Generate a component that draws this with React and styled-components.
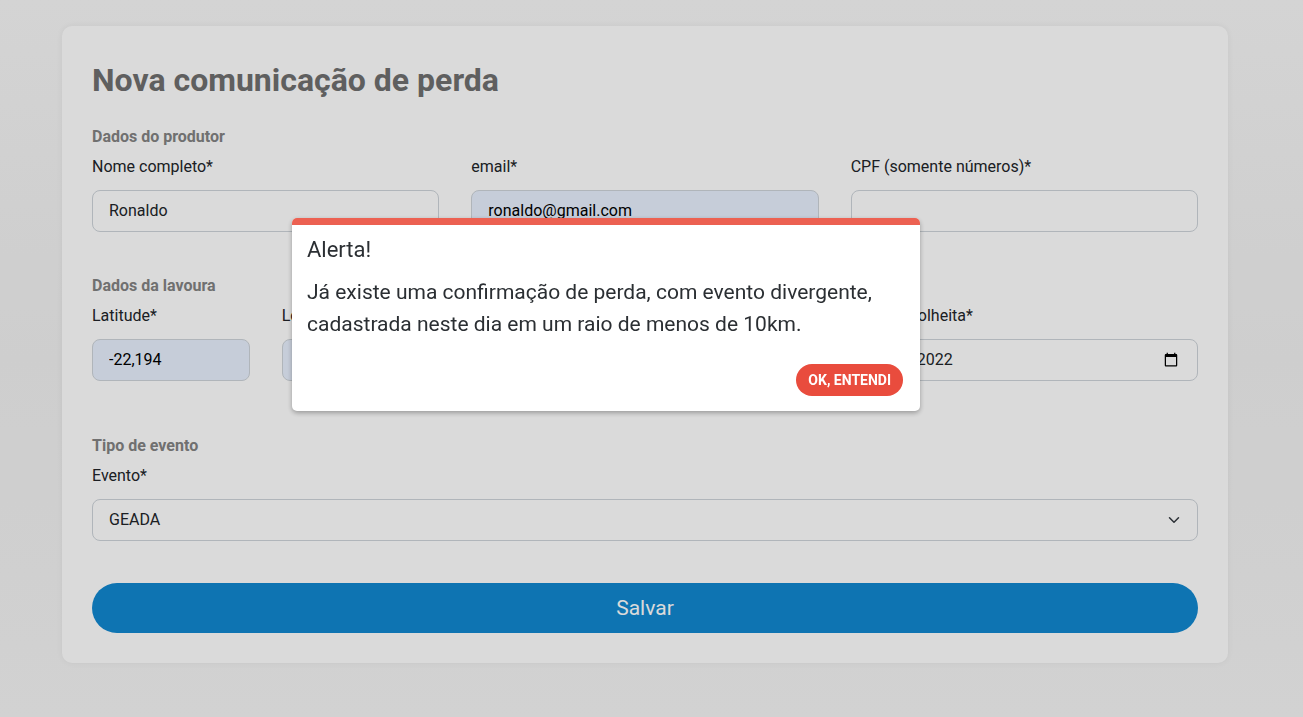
import React from "react";
import styled, { createGlobalStyle } from "styled-components";

const GlobalStyle = createGlobalStyle`
  *, *::before, *::after { box-sizing: border-box; }
  body {
    margin: 0;
    background: #f6f6f6;
    color: #212529;
    font: 400 16px/24px Roboto, "Liberation Sans", sans-serif;
  }
`;

const Page = styled.main`
  min-height: 100vh;
  padding: 26px 75px 54px 62px;
  background: linear-gradient(180deg, #f8f8f8 0%, #f1f1f1 50%, #f6f6f6 100%);
`;

const Card = styled.form`
  padding: 30px;
  border-radius: 10px;
  background: #fff;
  box-shadow: 0 0 6px rgba(0, 0, 0, 0.06);
`;

const Title = styled.h1`
  margin: 0 0 21px;
  color: #707070;
  font-size: 32px;
  line-height: 48px;
  font-weight: 700;
`;

const Section = styled.section`
  margin-bottom: ${({ $gap }) => $gap}px;
`;

const SectionTitle = styled.h2`
  margin: 0 0 6px;
  color: #838383;
  font-size: 16px;
  line-height: 24px;
  font-weight: 700;
`;

const Fields = styled.div`
  display: grid;
  grid-template-columns: repeat(12, minmax(0, 1fr));
  column-gap: 32px;
`;

const Field = styled.div`
  grid-column: span ${({ $span }) => $span};
  display: flex;
  flex-direction: column;
  gap: 11px;
`;

const Label = styled.label`
  line-height: 24px;
  white-space: nowrap;
`;

const Input = styled.input`
  width: 100%;
  height: 42px;
  padding: 7px 16px 9px;
  border: 1px solid #ced4da;
  border-radius: 8px;
  background: ${({ $filled }) => ($filled ? "#e8f0fe" : "#fff")};
  color: ${({ $filled }) => ($filled ? "#000" : "#212529")};
  font: inherit;

  &[type="date"] {
    padding: 8px 16px;
  }

  &::-webkit-datetime-edit-day-field,
  &::-webkit-datetime-edit-month-field,
  &::-webkit-datetime-edit-year-field {
    padding: 0;
  }
`;

const SelectBox = styled.div`
  display: grid;
  align-items: center;

  > * { grid-area: 1 / 1; }
  > svg { justify-self: end; margin-right: 18px; pointer-events: none; }
`;

const Select = styled.select`
  width: 100%;
  height: 42px;
  padding: 8px 16px;
  border: 1px solid #ced4da;
  border-radius: 8px;
  appearance: none;
  background: #fff;
  color: #212529;
  font: inherit;
`;

const SaveButton = styled.button`
  display: block;
  width: 100%;
  height: 50px;
  border: 0;
  border-radius: 25px;
  background: #1188d1;
  color: #fff;
  font: 400 21px/32px Roboto, sans-serif;
`;

const Overlay = styled.div`
  position: fixed;
  inset: 0;
  display: flex;
  align-items: center;
  justify-content: center;
  padding: 0 91px 88px 0;
  background: rgba(0, 0, 0, 0.145);
`;

const Dialog = styled.div`
  width: 628px;
  max-width: 100%;
  overflow: hidden;
  border-radius: 5px;
  background: #fff;
  box-shadow: 0 2px 5px rgba(0, 0, 0, 0.3);

  &::before {
    content: "";
    display: block;
    height: 7px;
    background: #ec6152;
  }
`;

const DialogBody = styled.div`
  padding: 9px 15px 24px;
  color: #2b2f33;
  font-size: 21px;
  line-height: 32px;
`;

const DialogTitle = styled.h2`
  margin: 0 0 10px;
  font-size: 22px;
  line-height: 32px;
  font-weight: 400;
`;

const DialogText = styled.p`
  margin: 0;
`;

const DialogActions = styled.div`
  display: flex;
  justify-content: flex-end;
  padding: 0 17px 15px;
`;

const ConfirmButton = styled.button`
  height: 32px;
  padding: 0 12px;
  border: 0;
  border-radius: 16px;
  background: #e94c3d;
  color: #fff;
  font: 700 14px/20px Roboto, sans-serif;
  text-transform: uppercase;
`;

function TextField({ id, label, span, ...rest }) {
  return (
    <Field $span={span}>
      <Label htmlFor={id}>{label}</Label>
      <Input id={id} {...rest} />
    </Field>
  );
}

export default function App() {
  return (
    <>
      <GlobalStyle />
      <Page>
        <Card onSubmit={(e) => e.preventDefault()}>
          <Title>Nova comunicação de perda</Title>
          <Section $gap={42}>
            <SectionTitle>Dados do produtor</SectionTitle>
            <Fields>
              <TextField id="nome" label="Nome completo*" span={4} defaultValue="Ronaldo" />
              <TextField id="email" label="email*" span={4} type="email" defaultValue="ronaldo@gmail.com" $filled />
              <TextField id="cpf" label="CPF (somente números)*" span={4} />
            </Fields>
          </Section>
          <Section $gap={53}>
            <SectionTitle>Dados da lavoura</SectionTitle>
            <Fields>
              <TextField id="latitude" label="Latitude*" span={2} defaultValue="-22,194" $filled />
              <TextField id="longitude" label="Longitude*" span={2} $filled />
              <TextField id="lavoura" label="Tipo da lavoura*" span={4} />
              <TextField id="colheita" label="Data da colheita*" span={4} type="date" defaultValue="2022-10-10" />
            </Fields>
          </Section>
          <Section $gap={42}>
            <SectionTitle>Tipo de evento</SectionTitle>
            <Field>
              <Label htmlFor="evento">Evento*</Label>
              <SelectBox>
                <Select id="evento" defaultValue="GEADA">
                  <option>GEADA</option>
                </Select>
                <svg width="12" height="12" viewBox="0 0 16 16" aria-hidden="true">
                  <path d="m2 5 6 6 6-6" fill="none" stroke="#343a40" strokeWidth="2" strokeLinecap="round" strokeLinejoin="round" />
                </svg>
              </SelectBox>
            </Field>
          </Section>
          <SaveButton type="submit">Salvar</SaveButton>
        </Card>
      </Page>
      <Overlay>
        <Dialog role="alertdialog" aria-modal="true" aria-labelledby="alerta-titulo" aria-describedby="alerta-texto">
          <DialogBody>
            <DialogTitle id="alerta-titulo">Alerta!</DialogTitle>
            <DialogText id="alerta-texto">
              Já existe uma confirmação de perda, com evento divergente, cadastrada neste dia em um raio de menos de 10km.
            </DialogText>
          </DialogBody>
          <DialogActions>
            <ConfirmButton type="button">Ok, entendi</ConfirmButton>
          </DialogActions>
        </Dialog>
      </Overlay>
    </>
  );
}
